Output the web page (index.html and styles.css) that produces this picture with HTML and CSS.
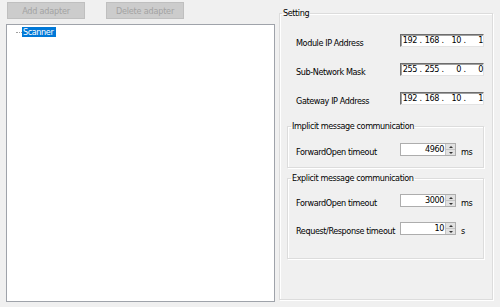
FILE: index.html
```html
<!DOCTYPE html>
<html lang="en">
  <head>
    <meta charset="UTF-8" />
    <title>Adapter Setting</title>
    <link rel="stylesheet" href="styles.css">
  </head>
  <body>
    <div class="app">
      <div class="left">
        <div class="toolbar">
          <button class="btn" disabled>Add adapter</button>
          <button class="btn" disabled>Delete adapter</button>
        </div>
        <div class="tree">
          <div class="node">
            <span class="branch"></span>
            <span class="node-label selected">Scanner</span>
          </div>
        </div>
      </div>

      <fieldset class="group setting">
        <legend>Setting</legend>
        <div class="ip-rows">
          <div class="row">
            <label>Module IP Address</label>
            <div class="ip">
              <span>192</span><span class="dot">.</span><span>168</span><span class="dot">.</span><span>10</span><span class="dot">.</span><span>1</span>
            </div>
          </div>
          <div class="row">
            <label>Sub-Network Mask</label>
            <div class="ip">
              <span>255</span><span class="dot">.</span><span>255</span><span class="dot">.</span><span>0</span><span class="dot">.</span><span>0</span>
            </div>
          </div>
          <div class="row">
            <label>Gateway IP Address</label>
            <div class="ip">
              <span>192</span><span class="dot">.</span><span>168</span><span class="dot">.</span><span>10</span><span class="dot">.</span><span>1</span>
            </div>
          </div>
        </div>

        <fieldset class="group sub implicit">
          <legend>Implicit message communication</legend>
          <div class="row">
            <label>ForwardOpen timeout</label>
            <div class="num">
              <span class="num-value">4960</span>
              <span class="spin"><i class="up"></i><i class="down"></i></span>
            </div>
            <span class="unit">ms</span>
          </div>
        </fieldset>

        <fieldset class="group sub explicit">
          <legend>Explicit message communication</legend>
          <div class="row">
            <label>ForwardOpen timeout</label>
            <div class="num">
              <span class="num-value">3000</span>
              <span class="spin"><i class="up"></i><i class="down"></i></span>
            </div>
            <span class="unit">ms</span>
          </div>
          <div class="row">
            <label>Request/Response timeout</label>
            <div class="num">
              <span class="num-value">10</span>
              <span class="spin"><i class="up"></i><i class="down"></i></span>
            </div>
            <span class="unit">s</span>
          </div>
        </fieldset>
      </fieldset>
    </div>
  </body>
</html>
```

FILE: styles.css
```css
body {
  margin: 0;
  background-color: #f0f0f0;
  font-family: "DejaVu Sans Condensed", "Liberation Sans", sans-serif;
  font-size: 9px;
  letter-spacing: -0.4px;
  white-space: nowrap;
  color: #000;
}
.app {
  display: flex;
  width: 500px;
  height: 307px;
  box-sizing: border-box;
  padding-left: 6px;
}
.left {
  width: 269px;
  padding-top: 2px;
}
.toolbar {
  display: flex;
  gap: 21px;
  padding-left: 1px;
}
.btn {
  width: 78px;
  height: 17px;
  padding: 0;
  font-family: inherit;
  font-size: 9px;
  letter-spacing: -0.2px;
  color: #a3a3a3;
  background-color: #cccccc;
  border: 1px solid #bfbfbf;
}
.tree {
  margin-top: 5px;
  height: 278px;
  box-sizing: border-box;
  background-color: #fff;
  border: 1px solid #9fa3aa;
  padding-top: 2px;
}
.node {
  display: flex;
  align-items: center;
  padding-left: 9px;
}
.branch {
  width: 6px;
  border-top: 1px dotted #a0a0a0;
}
.node-label {
  height: 10px;
  line-height: 10px;
  padding: 0 3px 0 1px;
}
.node-label.selected {
  background-color: #0078d7;
  color: #fff;
}

/* group boxes */
.group {
  margin: 0;
  min-width: 0;
  border: 1px solid #dcdcdc;
  box-shadow: inset 1px 1px 0 #fff, 1px 1px 0 #fff;
}
.group legend {
  padding: 0 1px;
  margin-left: -5px;
  line-height: 12px;
}
.setting {
  width: 214px;
  height: 293px;
  box-sizing: border-box;
  margin: 7px 0 0 4px;
  padding: 0 8px 0 7px;
}
.ip-rows {
  display: flex;
  flex-direction: column;
  gap: 14px;
  padding: 15px 0 0 9px;
}
.row {
  display: flex;
  align-items: flex-start;
}
.row label {
  width: 104px;
  flex: none;
  padding-top: 3px;
  line-height: 12px;
}
.ip {
  display: grid;
  grid-template-columns: 15px 7px 15px 7px 15px 7px 15px;
  width: 84px;
  height: 13px;
  box-sizing: border-box;
  padding-left: 1px;
  line-height: 11px;
  background-color: #fff;
  border: 1px solid;
  border-color: #6d6d6d #e3e3e3 #e3e3e3 #6d6d6d;
  box-shadow: inset 1px 1px 0 #a0a0a0;
}
.ip span {
  text-align: right;
}
.ip .dot {
  text-align: center;
}
.sub {
  padding: 0 0 0 8px;
}
.implicit {
  margin-top: 13px;
  height: 48px;
  box-sizing: border-box;
}
.implicit .row {
  margin-top: 11px;
}
.explicit {
  margin-top: 4px;
  height: 87px;
  box-sizing: border-box;
}
.explicit .row {
  margin-top: 10px;
}
.explicit .row + .row {
  margin-top: 13px;
}
.num {
  display: flex;
  width: 56px;
  height: 13px;
  box-sizing: border-box;
  background-color: #fff;
  border: 1px solid #adadad;
}
.num-value {
  flex: 1;
  text-align: right;
  line-height: 11px;
  padding-right: 1px;
}
.spin {
  display: flex;
  flex-direction: column;
  width: 9px;
  background-color: #e1e1e1;
  border-left: 1px solid #c4c4c4;
}
.spin i {
  flex: 1;
  display: flex;
  align-items: center;
  justify-content: center;
}
.spin i::after {
  content: "";
  border-left: 2px solid transparent;
  border-right: 2px solid transparent;
}
.spin .up::after {
  border-bottom: 2px solid #333;
}
.spin .down {
  border-top: 1px solid #c4c4c4;
}
.spin .down::after {
  border-top: 2px solid #333;
}
.unit {
  margin-left: 5px;
  padding-top: 3px;
  line-height: 12px;
}
```
